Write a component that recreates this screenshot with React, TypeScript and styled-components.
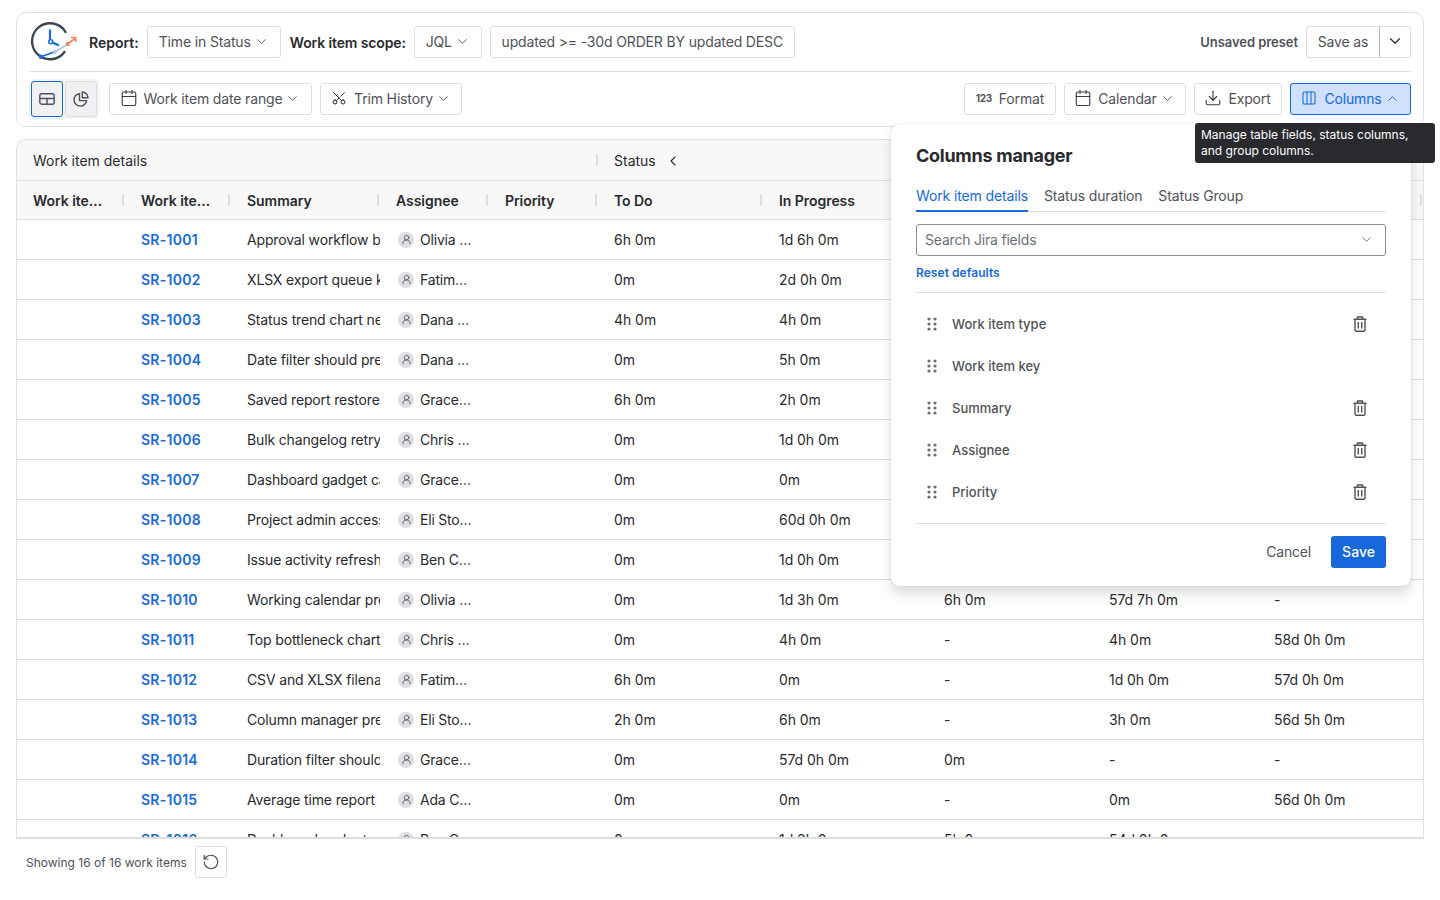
import React, {ReactNode} from 'react'
import styled, {createGlobalStyle} from 'styled-components'
import {Calendar, ChevronDown, ChevronLeft, ChevronUp, Columns3, Download, RotateCcw, Scissors, UserRound} from 'lucide-react'

const GlobalStyle = createGlobalStyle`
  html, body {
    margin: 0;
    padding: 0;
    background: #fff;
    height: 900px;
    overflow: hidden;
    font-family: Inter, "Liberation Sans", sans-serif;
    font-size: 14px;
    color: #292a2e;
  }
  * { box-sizing: border-box; }
`

const Page = styled.div`
  position: relative;
  width: 1440px;
  height: 900px;
  padding: 12px 16px 0;
`

const TopCard = styled.section`
  height: 115px;
  border: 1px solid #dfe1e4;
  border-radius: 10px;
  padding: 13px 12px 0 12px;
`

const Bar = styled.div`
  display: flex;
  align-items: center;
  height: 32px;
`

const Divider = styled.div`
  height: 1px;
  background: #dddee1;
  margin: 13px 0 11px;
`

const Spacer = styled.div`
  flex: 1;
`

const LabelText = styled.span<{$left?: number; $tight?: boolean}>`
  font-weight: 600;
  letter-spacing: ${p => p.$tight ? '-0.13px' : '0'};
  color: #292a2e;
  margin-left: ${p => p.$left ?? 0}px;
  margin-right: 8px;
`

const Button = styled.button<{$active?: boolean; $w: number; $gap?: number}>`
  display: inline-flex;
  align-items: center;
  justify-content: center;
  gap: ${p => p.$gap ?? 7}px;
  width: ${p => p.$w}px;
  height: 32px;
  flex: none;
  padding: 0 0 2px;
  border-radius: 3px;
  border: 1px solid ${p => p.$active ? '#1868db' : '#dddee1'};
  background: ${p => p.$active ? '#cfe1fd' : '#fff'};
  color: ${p => p.$active ? '#1868db' : '#505258'};
  font: 400 14px Inter, "Liberation Sans", sans-serif;
  letter-spacing: -0.15px;
`

const PresetText = styled.span`
  font-size: 13px;
  font-weight: 600;
  letter-spacing: -0.05px;
  color: #505258;
  margin-right: 8px;
`

const SplitLeft = styled(Button)`
  border-radius: 3px 0 0 3px;
  border-right: 0;
`

const SplitRight = styled(Button)`
  border-radius: 0 3px 3px 0;
  color: #292a2e;
  border-left: 1px solid #b7b9be;
`

const ToggleGroup = styled.div`
  display: flex;
  flex: none;
  gap: 2px;
  margin: -4px 10px -4px 0;
  padding: 2px;
  height: 40px;
  width: 70px;
  border-radius: 3px;
  background: #f4f4f5;
`

const Toggle = styled.button<{$on?: boolean}>`
  display: flex;
  align-items: center;
  justify-content: center;
  width: 32px;
  height: 36px;
  padding: 0;
  flex: none;
  border-radius: 3px;
  border: 1px solid ${p => p.$on ? '#1868db' : '#dddee1'};
  background: #f0f1f2;
  color: #505258;
`

const Gap = styled.div<{$w: number}>`
  width: ${p => p.$w}px;
  flex: none;
`

const FormatGlyph = styled.span`
  font-size: 10px;
  font-weight: 700;
  letter-spacing: -0.4px;
  width: 16px;
  text-align: center;
  color: #505258;
`

const TrimIcon = styled(Scissors)`
  transform: rotate(-90deg);
  color: #292a2e;
`

const CalendarIcon = styled(Calendar)`
  margin: 0 -1px;
  color: #3b3d42;
`

const ExportIcon = styled(Download)`
  margin: 0 -1px;
  color: #3b3d42;
`

const TableFrame = styled.section`
  height: 700px;
  margin-top: 12px;
  border: 1px solid #dfe1e4;
  border-bottom: 2px solid #dddee1;
  border-radius: 10px 10px 0 0;
  overflow: hidden;
`

const columns = '108px 106px 149px 109px 109px 165px 165px 165px 165px 165px'

const GroupRow = styled.div`
  display: grid;
  grid-template-columns: 581px 825px;
  height: 41px;
  background: #f8f8f8;
  border-bottom: 1px solid #dddee1;
  align-items: center;
`

const GroupCell = styled.div<{$sep?: boolean}>`
  display: flex;
  align-items: center;
  gap: 9px;
  height: 12px;
  padding: 2px 0 0 16px;
  line-height: 14px;
  color: #292a2e;
  border-left: ${p => p.$sep ? '2px solid #dddee1' : '0'};
  margin-left: ${p => p.$sep ? '-2px' : '0'};
`

const HeadRow = styled.div`
  display: grid;
  grid-template-columns: ${columns};
  height: 39px;
  background: #f8f8f8;
  border-bottom: 1px solid #dddee1;
  align-items: center;
`

const HeadCell = styled.div`
  height: 12px;
  line-height: 14px;
  padding: 0 16px;
  margin-right: 1px;
  font-weight: 600;
  letter-spacing: -0.05px;
  white-space: nowrap;
  color: #292a2e;
  border-right: 2px solid #dddee1;
`

const Row = styled.div`
  display: grid;
  grid-template-columns: ${columns};
  height: 40px;
  border-bottom: 1px solid #dddee1;
  align-items: center;
`

const Cell = styled.div`
  padding-left: 16px;
  white-space: nowrap;
  overflow: hidden;
  letter-spacing: -0.05px;
  color: #292a2e;
`

const KeyCell = styled(Cell)`
  font-weight: 600;
  letter-spacing: 0.25px;
  color: #1868db;
`

const SummaryCell = styled(Cell)`
  letter-spacing: -0.15px;
`

const AssigneeCell = styled(Cell)`
  display: flex;
  align-items: center;
  gap: 6px;
  padding-left: 18px;
`

const Avatar = styled.span`
  display: flex;
  align-items: center;
  justify-content: center;
  flex: none;
  width: 16px;
  height: 16px;
  border-radius: 50%;
  background: #dddee1;
  color: #505258;
`

const Name = styled.span`
  width: 53px;
  overflow: hidden;
  text-overflow: ellipsis;
  letter-spacing: -0.2px;
`

const Footer = styled.footer`
  display: flex;
  align-items: center;
  gap: 8px;
  height: 32px;
  margin-top: 7px;
  padding-left: 10px;
  font-size: 12px;
  color: #505258;
`

const IconBtn = styled(Button)`
  color: #505258;
  padding: 0;
`

const Popover = styled.div`
  position: absolute;
  left: 891px;
  top: 124px;
  width: 520px;
  height: 462px;
  padding: 20px 25px 0;
  background: #fff;
  border-radius: 8px;
  box-shadow: 0 8px 12px rgba(30, 31, 33, 0.15), 0 0 1px rgba(30, 31, 33, 0.31);
`

const PopTitle = styled.h2`
  margin: 0;
  font-size: 18px;
  line-height: 24px;
  font-weight: 650;
  letter-spacing: -0.27px;
  color: #292a2e;
`

const Tabs = styled.div`
  display: flex;
  gap: 16px;
  height: 31px;
  margin-top: 13px;
  border-bottom: 1px solid #dddee1;
`

const Tab = styled.div<{$on?: boolean}>`
  height: 31px;
  line-height: 30px;
  letter-spacing: -0.13px;
  color: ${p => p.$on ? '#1868db' : '#505258'};
  border-bottom: 2px solid ${p => p.$on ? '#1868db' : 'transparent'};
`

const SearchBox = styled.div`
  display: flex;
  align-items: center;
  justify-content: space-between;
  height: 32px;
  margin-top: 12px;
  padding: 0 11px 2px 8px;
  border: 1px solid #8c8f97;
  border-radius: 3px;
  letter-spacing: -0.2px;
  color: #6b6e76;
`

const ResetLink = styled.div`
  margin-top: 9px;
  font-size: 12px;
  line-height: 16px;
  font-weight: 600;
  letter-spacing: 0.05px;
  color: #1868db;
`

const PopDivider = styled.div<{$top: number}>`
  height: 1px;
  background: #dddee1;
  margin-top: ${p => p.$top}px;
`

const FieldList = styled.div`
  padding-top: 10px;
`

const FieldRow = styled.div`
  display: flex;
  align-items: center;
  height: 42px;
  padding: 0 18px 0 11px;
  font-size: 13px;
  font-weight: 500;
  color: #505258;
`

const FieldName = styled.span`
  flex: 1;
  margin-left: 15px;
`

const Grip = styled.svg`
  flex: none;
  color: #6b6e76;
`

const PopActions = styled.div`
  display: flex;
  align-items: center;
  justify-content: flex-end;
  gap: 20px;
  margin-top: 12px;
`

const CancelText = styled.span`
  margin-bottom: 2px;
  letter-spacing: -0.2px;
  color: #505258;
`

const SaveBtn = styled.button`
  width: 55px;
  height: 32px;
  padding: 0 0 2px;
  border: 0;
  border-radius: 3px;
  background: #1868db;
  color: #fff;
  font: 500 14px Inter, "Liberation Sans", sans-serif;
`

const Tooltip = styled.div`
  position: absolute;
  left: 1195px;
  top: 123px;
  width: 240px;
  height: 40px;
  padding: 4px 6px;
  border-radius: 3px;
  background: #292a2e;
  color: #fff;
  font-size: 12px;
  line-height: 16px;
`

const LogoSvg = styled.svg`
  flex: none;
  margin-left: 1px;
  margin-right: 10px;
`

const ChevronGap = styled.span`
  display: inline-flex;
  margin-left: -4px;
`

const Logo = () => (
  <LogoSvg width="49" height="44" viewBox="0 0 49 44" fill="none">
    <path d="M35.5 12 A18 18 0 1 0 34.5 32" stroke="#3a4657" strokeWidth="2.4" strokeLinecap="round" />
    <path d="M20 9.5 V20" stroke="#1868db" strokeWidth="2.2" />
    <path d="M22.5 22.5 L29 25.5" stroke="#1868db" strokeWidth="2.2" />
    <circle cx="20.7" cy="21.7" r="2" stroke="#1868db" strokeWidth="1.5" fill="#fff" />
    <path d="M11 36.7 L25 31.7" stroke="#1868db" strokeWidth="1.6" />
    <path d="M25 31.7 L37.7 24" stroke="#a8c5f5" strokeWidth="1.6" />
    <path d="M37.7 24 L45 18.5" stroke="#f0805f" strokeWidth="1.6" />
    <path d="M41 17.5 H45.7 V22" stroke="#f0805f" strokeWidth="1.6" />
    <circle cx="11" cy="36.7" r="2.2" fill="#1868db" />
    <circle cx="25" cy="31.7" r="2" fill="#a8c5f5" />
    <circle cx="37.7" cy="24" r="2" fill="#f0805f" />
  </LogoSvg>
)

const TableIcon = () => (
  <svg width="16" height="16" viewBox="0 0 16 16" fill="none" stroke="currentColor" strokeWidth="1.4">
    <rect x="0.8" y="2.8" width="14.4" height="10.4" rx="2" />
    <path d="M0.8 7.5 H15.2 M8 7.5 V13.2" />
  </svg>
)

const PieIcon = () => (
  <svg width="16" height="16" viewBox="0 0 16 16" fill="none" stroke="currentColor" strokeWidth="1.4">
    <path d="M6.5 2.6 A6.3 6.3 0 1 0 13.6 9.6 H6.5 Z" />
    <path d="M9.3 1 A5.8 5.8 0 0 1 15 6.8 H9.3 Z" />
  </svg>
)

const GripIcon = () => (
  <Grip width="10" height="14" viewBox="0 0 10 14" fill="currentColor">
    <circle cx="2" cy="2" r="1.6" /><circle cx="8" cy="2" r="1.6" />
    <circle cx="2" cy="7" r="1.6" /><circle cx="8" cy="7" r="1.6" />
    <circle cx="2" cy="12" r="1.6" /><circle cx="8" cy="12" r="1.6" />
  </Grip>
)

const TrashSvg = styled.svg`
  flex: none;
`

const TrashIcon = () => (
  <TrashSvg width="16" height="16" viewBox="0 0 16 16" fill="none" stroke="#505258" strokeWidth="1.4">
    <path d="M1.5 3.2 H14.5 M5.5 3 V1 H10.5 V3" />
    <path d="M3 3.2 V14 A1.2 1.2 0 0 0 4.2 15.2 H11.8 A1.2 1.2 0 0 0 13 14 V3.2" />
    <path d="M6.3 6 V12.5 M9.7 6 V12.5" />
  </TrashSvg>
)

const Chev = ({up}: {up?: boolean}) => up
  ? <ChevronUp size={15} strokeWidth={1.5} />
  : <ChevronDown size={15} strokeWidth={1.5} />

interface WorkItem {
  key: string
  summary: string
  name: string
  todo: string
  progress: string
  third: string
  fourth: string
  fifth: string
}

const item = (n: number, summary: string, name: string, todo: string, progress: string, third = '-', fourth = '-', fifth = '-'): WorkItem => ({
  key: `SR-${1000 + n}`, summary, name, todo, progress, third, fourth, fifth,
})

const items: WorkItem[] = [
  item(1, 'Approval workflow blocked', 'Olivia Martin', '6h 0m', '1d 6h 0m'),
  item(2, 'XLSX export queue keeps', 'Fatima Khan', '0m', '2d 0h 0m'),
  item(3, 'Status trend chart needs', 'Dana Whitfield', '4h 0m', '4h 0m'),
  item(4, 'Date filter should preserve', 'Dana Whitfield', '0m', '5h 0m'),
  item(5, 'Saved report restore fails', 'Grace Hopper', '6h 0m', '2h 0m'),
  item(6, 'Bulk changelog retry job', 'Chris Parker', '0m', '1d 0h 0m'),
  item(7, 'Dashboard gadget cache', 'Grace Hopper', '0m', '0m'),
  item(8, 'Project admin access check', 'Eli Stone', '0m', '60d 0h 0m'),
  item(9, 'Issue activity refresh lag', 'Ben Carter', '0m', '1d 0h 0m'),
  item(10, 'Working calendar preview', 'Olivia Martin', '0m', '1d 3h 0m', '6h 0m', '57d 7h 0m', '-'),
  item(11, 'Top bottleneck chart labels', 'Chris Parker', '0m', '4h 0m', '-', '4h 0m', '58d 0h 0m'),
  item(12, 'CSV and XLSX filename', 'Fatima Khan', '6h 0m', '0m', '-', '1d 0h 0m', '57d 0h 0m'),
  item(13, 'Column manager preset', 'Eli Stone', '2h 0m', '6h 0m', '-', '3h 0m', '56d 5h 0m'),
  item(14, 'Duration filter should', 'Grace Hopper', '0m', '57d 0h 0m', '0m', '-', '-'),
  item(15, 'Average time report', 'Ada Chen', '0m', '0m', '-', '0m', '56d 0h 0m'),
  item(16, 'Dashboard gadget summary', 'Ben Carter', '0m', '1d 3h 0m', '5h 0m', '54d 0h 0m', '-'),
]

const headers = ['Work item type', 'Work item key', 'Summary', 'Assignee', 'Priority', 'To Do', 'In Progress', 'In Review', 'Done', 'Closed']

const HeadLabel = styled.span<{$clip?: boolean}>`
  display: block;
  ${p => p.$clip && `
    overflow: hidden;
    text-overflow: ellipsis;
    width: 70px;
  `}
`

const fields = [
  {name: 'Work item type', removable: true},
  {name: 'Work item key', removable: false},
  {name: 'Summary', removable: true},
  {name: 'Assignee', removable: true},
  {name: 'Priority', removable: true},
]

const ToolButton = ({w, icon, children, active, chevron}: {w: number; icon?: ReactNode; children: ReactNode; active?: boolean; chevron?: 'up' | 'down'}) => (
  <Button $w={w} $active={active}>
    {icon}
    {children}
    {chevron && <ChevronGap><Chev up={chevron === 'up'} /></ChevronGap>}
  </Button>
)

const App = () => (
  <Page>
    <GlobalStyle />
    <TopCard>
      <Bar>
        <Logo />
        <LabelText>Report:</LabelText>
        <ToolButton w={134} chevron="down">Time in Status</ToolButton>
        <LabelText $left={9} $tight>Work item scope:</LabelText>
        <ToolButton w={68} chevron="down">JQL</ToolButton>
        <Gap $w={8} />
        <Button $w={305}>updated &gt;= -30d ORDER BY updated DESC</Button>
        <Spacer />
        <PresetText>Unsaved preset</PresetText>
        <SplitLeft $w={73}>Save as</SplitLeft>
        <SplitRight $w={32}><ChevronDown size={18} strokeWidth={1.6} /></SplitRight>
      </Bar>
      <Divider />
      <Bar>
        <ToggleGroup>
          <Toggle $on><TableIcon /></Toggle>
          <Toggle><PieIcon /></Toggle>
        </ToggleGroup>
        <ToolButton w={203} icon={<CalendarIcon size={18} strokeWidth={1.5} />} chevron="down">Work item date range</ToolButton>
        <Gap $w={8} />
        <ToolButton w={142} icon={<TrimIcon size={16} strokeWidth={1.5} />} chevron="down">Trim History</ToolButton>
        <Spacer />
        <ToolButton w={92} icon={<FormatGlyph>123</FormatGlyph>}>Format</ToolButton>
        <Gap $w={8} />
        <ToolButton w={122} icon={<CalendarIcon size={18} strokeWidth={1.5} />} chevron="down">Calendar</ToolButton>
        <Gap $w={8} />
        <ToolButton w={88} icon={<ExportIcon size={18} strokeWidth={1.5} />}>Export</ToolButton>
        <Gap $w={8} />
        <ToolButton w={121} active icon={<Columns3 size={16} strokeWidth={1.6} />} chevron="up">Columns</ToolButton>
      </Bar>
    </TopCard>

    <TableFrame>
      <GroupRow>
        <GroupCell>Work item details</GroupCell>
        <GroupCell $sep>Status <ChevronLeft size={16} strokeWidth={1.6} /></GroupCell>
      </GroupRow>
      <HeadRow>
        {headers.map((h, i) => (
          <HeadCell key={h}>
            <HeadLabel $clip={i < 2}>{h}</HeadLabel>
          </HeadCell>
        ))}
      </HeadRow>
      {items.map(row => (
        <Row key={row.key}>
          <Cell />
          <KeyCell>{row.key}</KeyCell>
          <SummaryCell>{row.summary}</SummaryCell>
          <AssigneeCell>
            <Avatar><UserRound size={11} strokeWidth={1.8} /></Avatar>
            <Name>{row.name}</Name>
          </AssigneeCell>
          <Cell />
          <Cell>{row.todo}</Cell>
          <Cell>{row.progress}</Cell>
          <Cell>{row.third}</Cell>
          <Cell>{row.fourth}</Cell>
          <Cell>{row.fifth}</Cell>
        </Row>
      ))}
    </TableFrame>

    <Footer>
      <span>Showing 16 of 16 work items</span>
      <IconBtn $w={32}><RotateCcw size={18} strokeWidth={1.6} /></IconBtn>
    </Footer>

    <Popover>
      <PopTitle>Columns manager</PopTitle>
      <Tabs>
        <Tab $on>Work item details</Tab>
        <Tab>Status duration</Tab>
        <Tab>Status Group</Tab>
      </Tabs>
      <SearchBox>
        Search Jira fields
        <Chev />
      </SearchBox>
      <ResetLink>Reset defaults</ResetLink>
      <PopDivider $top={11} />
      <FieldList>
        {fields.map(f => (
          <FieldRow key={f.name}>
            <GripIcon />
            <FieldName>{f.name}</FieldName>
            {f.removable && <TrashIcon />}
          </FieldRow>
        ))}
      </FieldList>
      <PopDivider $top={10} />
      <PopActions>
        <CancelText>Cancel</CancelText>
        <SaveBtn>Save</SaveBtn>
      </PopActions>
    </Popover>

    <Tooltip>Manage table fields, status columns, and group columns.</Tooltip>
  </Page>
)

export default App
